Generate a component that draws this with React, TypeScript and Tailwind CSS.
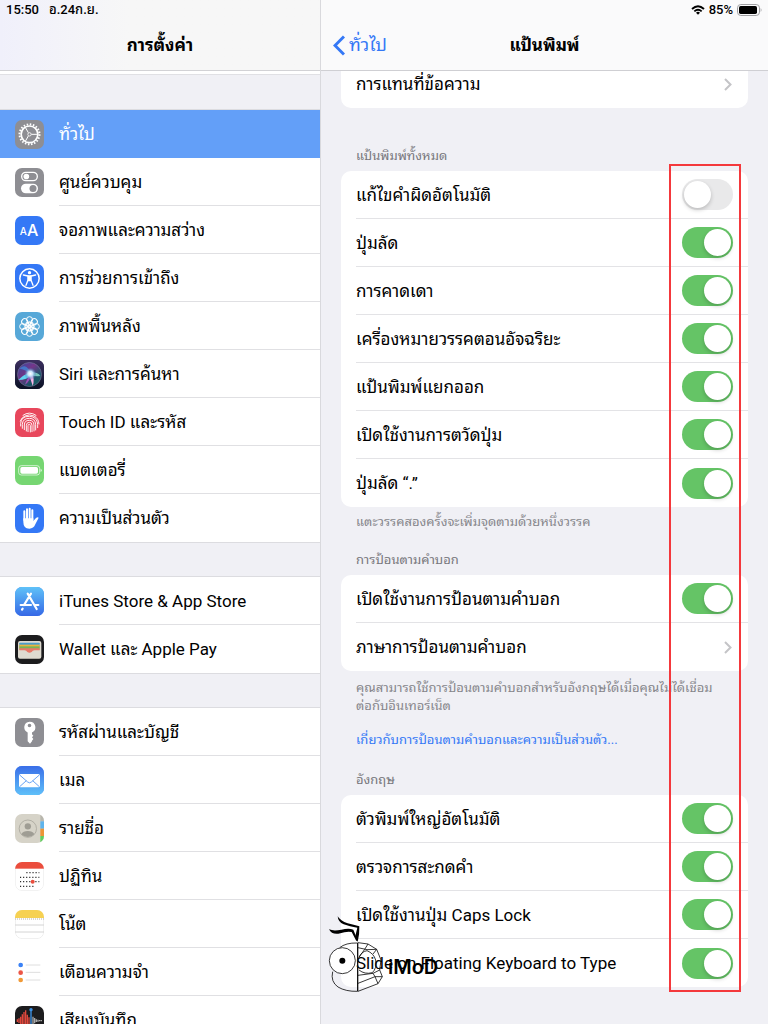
import React from 'react';

interface MenuItem {
  label: string;
  icon: React.ReactNode;
  active?: boolean;
}

interface IconTileProps {
  fill?: string;
  children?: React.ReactNode;
}

const IconTile: React.FC<IconTileProps> = ({ fill = '#ffffff', children }) => (
  <svg viewBox="0 0 87 87" className="h-[29px] w-[29px] shrink-0 overflow-hidden rounded-[7px]" aria-hidden="true">
    <rect width="87" height="87" fill={fill} />
    {children}
  </svg>
);

const GeneralIcon = () => (
  <IconTile fill="#8e8e93">
    <g fill="none" stroke="#fff">
      <circle cx="43.5" cy="43" r="30" strokeWidth="6" strokeDasharray="4.6 4.82" />
      <circle cx="43.5" cy="43" r="25" strokeWidth="5" />
      <circle cx="43.5" cy="43" r="5" strokeWidth="2.5" />
      <path d="M49 43H67M40 38L31 22M40 48L31 64" strokeWidth="3" />
    </g>
  </IconTile>
);

const ControlCenterIcon = () => (
  <IconTile fill="#8e8e93">
    <rect x="20" y="13" width="47" height="25" rx="12.5" fill="none" stroke="#fff" strokeWidth="4" />
    <circle cx="34" cy="25.5" r="8.5" fill="#fff" />
    <rect x="18" y="47" width="51" height="29" rx="14.5" fill="#fff" />
    <circle cx="54" cy="61.5" r="10.5" fill="#8e8e93" />
  </IconTile>
);

const DisplayIcon = () => (
  <IconTile fill="#3478f6">
    <g fill="#fff" fontFamily="Inter, sans-serif" fontWeight="500">
      <text x="14" y="56" fontSize="30">A</text>
      <text x="36" y="61" fontSize="48">A</text>
    </g>
  </IconTile>
);

const AccessibilityIcon = () => (
  <IconTile fill="#3478f6">
    <circle cx="43.5" cy="43.5" r="29" fill="none" stroke="#fff" strokeWidth="4.5" />
    <circle cx="43.5" cy="26" r="5" fill="#fff" />
    <path d="M25 33L39 36V48L33 64M62 33L48 36V48L54 64" fill="none" stroke="#fff" strokeWidth="4" strokeLinecap="round" strokeLinejoin="round" />
    <path d="M38 34H49V52H38Z" fill="#fff" />
  </IconTile>
);

const WallpaperIcon = () => (
  <IconTile fill="#57a8d8">
    <g fill="none" stroke="#fff" strokeWidth="3">
      {[0, 45, 90, 135, 180, 225, 270, 315].map((angle) => (
        <g key={angle} transform={`rotate(${angle} 43.5 43.5)`}>
          <circle cx="43.5" cy="23" r="9" />
          <ellipse cx="43.5" cy="35" rx="4.5" ry="6" />
        </g>
      ))}
      <circle cx="43.5" cy="43.5" r="4" />
    </g>
  </IconTile>
);

const SiriIcon = () => (
  <IconTile fill="#15142b">
    <defs>
      <linearGradient id="siri-bg" x1="0" y1="0" x2="0" y2="1">
        <stop offset="0" stopColor="#3c2f60" />
        <stop offset="1" stopColor="#0b1226" />
      </linearGradient>
      <radialGradient id="siri-core">
        <stop offset="0" stopColor="#ffffff" />
        <stop offset="0.4" stopColor="#c4e2fa" />
        <stop offset="1" stopColor="#2b5ea8" stopOpacity="0" />
      </radialGradient>
      <linearGradient id="siri-orb" x1="0" y1="0" x2="1" y2="1">
        <stop offset="0" stopColor="#2d57b8" />
        <stop offset="0.4" stopColor="#8d3a9c" />
        <stop offset="0.7" stopColor="#1c6a7a" />
        <stop offset="1" stopColor="#1b7d6c" />
      </linearGradient>
    </defs>
    <rect width="87" height="87" fill="url(#siri-bg)" />
    <circle cx="43.5" cy="43.5" r="36" fill="url(#siri-orb)" opacity="0.75" stroke="#8c8bb0" strokeWidth="2" />
    <path d="M47 40Q34 6 14 26Q28 28 47 40Z" fill="#3d8fe0" opacity="0.7" />
    <path d="M50 36Q24 44 10 60Q36 60 50 44Z" fill="#5fd2f0" />
    <path d="M44 36Q70 36 76 48Q60 50 44 44Z" fill="#8be4cf" opacity="0.8" />
    <path d="M41 40L53 78Q60 58 51 38Z" fill="#f8b4e6" />
    <path d="M45 42Q34 62 30 74Q46 62 48 44Z" fill="#b44fc9" opacity="0.8" />
    <circle cx="46" cy="41" r="19" fill="url(#siri-core)" />
  </IconTile>
);

const TouchIdIcon = () => (
  <IconTile fill="#e8475c">
    <g fill="none" stroke="#fff" strokeWidth="2.8" strokeLinecap="round">
      <path d="M24 22Q43 8 63 22" />
      <path d="M16 39Q20 28 30 24Q43 17 57 24Q71 31 72 48" />
      <path d="M17 54V46Q18 25 43 25Q66 26 68 49V59" />
      <path d="M22 61V49Q23 31 43 31Q61 31 62 50V66" />
      <path d="M28 65V51Q28 37 43 37Q56 37 57 51V69" />
      <path d="M34 69V52Q34 43 43 43Q51 43 51 52V71" />
      <path d="M39 71V53Q39 49 43 49Q46 49 46 53V72" />
    </g>
  </IconTile>
);

const BatteryIcon = () => (
  <IconTile fill="#76d672">
    <rect x="11" y="29" width="63" height="28" rx="8" fill="none" stroke="#fff" strokeWidth="2.5" opacity="0.8" />
    <rect x="16" y="33" width="53" height="20" rx="5" fill="#fff" />
    <path d="M77 38Q83 43 77 48Z" fill="#fff" />
  </IconTile>
);

const PrivacyIcon = () => (
  <IconTile fill="#3478f6">
    <path d="M28 22V48M36 16V44M44 14V44M52 19V48" stroke="#fff" strokeWidth="6" strokeLinecap="round" />
    <path d="M25 43H55V51L63 42Q68 38 71 41L61 61Q56 74 43 74Q25 74 25 54Z" fill="#fff" />
  </IconTile>
);

const AppStoreIcon = () => (
  <IconTile fill="#3b82f2">
    <defs>
      <linearGradient id="store-bg" x1="0" y1="0" x2="0" y2="1">
        <stop offset="0" stopColor="#5fc2f8" />
        <stop offset="1" stopColor="#3668e6" />
      </linearGradient>
    </defs>
    <rect width="87" height="87" fill="url(#store-bg)" />
    <g stroke="#fff" strokeWidth="6.5" strokeLinecap="round">
      <path d="M48 20L27 54M38 20L65 66M23 65L21 68M17 54H48M60 54H70" />
    </g>
  </IconTile>
);

const WalletIcon = () => (
  <IconTile fill="#1c1c1e">
    <rect x="9" y="18" width="70" height="53" rx="6" fill="#dedad0" />
    <rect x="13" y="23" width="61" height="12" rx="2" fill="#4d9dc9" />
    <rect x="13" y="29" width="61" height="10" fill="#e9b53f" />
    <rect x="13" y="34" width="61" height="10" fill="#7bb457" />
    <path d="M13 40H74V50H58Q53 50 50 54Q43 59 37 54Q34 50 29 50H13Z" fill="#e97868" />
    <path d="M12 46H29Q34 46 37 51Q43 56 50 51Q53 46 58 46H75V65Q75 68 71 68H16Q12 68 12 65Z" fill="#dedad0" />
  </IconTile>
);

const PasswordsIcon = () => (
  <IconTile fill="#8e8e93">
    <path
      fillRule="evenodd"
      fill="#fff"
      d="M43.5 11A17 17 0 0 1 51 43.5V49L55 53L51 58L55 63L51 68V70L45 77L38 70V43.5A17 17 0 0 1 43.5 11ZM43.5 17A5.5 5.5 0 1 0 43.5 28A5.5 5.5 0 1 0 43.5 17Z"
    />
  </IconTile>
);

const MailIcon = () => (
  <IconTile fill="#3f8cf3">
    <defs>
      <linearGradient id="mail-bg" x1="0" y1="0" x2="0" y2="1">
        <stop offset="0" stopColor="#3a6ee8" />
        <stop offset="1" stopColor="#5fc0f9" />
      </linearGradient>
    </defs>
    <rect width="87" height="87" fill="url(#mail-bg)" />
    <rect x="12" y="24" width="63" height="40" rx="5" fill="#fff" />
    <path d="M14 27L38 48Q43.5 53 49 48L73 27M14 62L34 44M73 62L53 44" fill="none" stroke="#4a8ff0" strokeWidth="2.5" />
  </IconTile>
);

const ContactsIcon = () => (
  <IconTile fill="#d6d3c8">
    <rect x="76" y="0" width="11" height="22" fill="#b8b6ad" />
    <rect x="76" y="22" width="11" height="22" fill="#5fb4ec" />
    <rect x="76" y="44" width="11" height="22" fill="#ec9638" />
    <rect x="76" y="66" width="11" height="21" fill="#62cf60" />
    <circle cx="38.5" cy="44" r="26" fill="none" stroke="#aaa79d" strokeWidth="2.5" />
    <circle cx="38.5" cy="37" r="9.5" fill="#9f9d94" />
    <path d="M19 61Q24 51 38.5 51Q53 51 58 61Q50 69 38.5 69Q27 69 19 61Z" fill="#9f9d94" />
  </IconTile>
);

const CalendarIcon = () => (
  <IconTile>
    <rect x="1" y="1" width="85" height="85" rx="20" fill="#fff" stroke="#e8e8e8" strokeWidth="2" />
    <rect width="87" height="20" fill="#eb4d3d" />
    <g stroke="#2b2b2b" strokeWidth="4" strokeDasharray="3.5 5.7">
      <path d="M34 32H73M15 46H73M15 59H73M15 73H56" />
    </g>
    <circle cx="53" cy="59" r="6" fill="#eb4d3d" />
  </IconTile>
);

const NotesIcon = () => (
  <IconTile>
    <rect x="1" y="1" width="85" height="85" rx="20" fill="#fff" stroke="#e4e4e4" strokeWidth="2" />
    <rect width="87" height="24" fill="#f6d152" />
    <path d="M0 27H87" stroke="#b5b2a8" strokeWidth="3" strokeDasharray="3 3" />
    <path d="M0 45H87M0 66H87" stroke="#d4d4d4" strokeWidth="3" />
  </IconTile>
);

const RemindersIcon = () => (
  <IconTile>
    <circle cx="17" cy="21" r="7" fill="#3b82f6" />
    <circle cx="17" cy="44" r="7" fill="#ec5545" />
    <circle cx="17" cy="66" r="7" fill="#f19a37" />
    <path d="M32 21H76M32 43H76M32 66H76" stroke="#dedede" strokeWidth="3" />
  </IconTile>
);

const VoiceMemosIcon = () => (
  <IconTile fill="#1c1c1e">
    <g strokeWidth="4">
      <path d="M7 40V48M12 37V51M17 32V56M22 25V62M27 18V70M32 13V74M37 26V62M42 34V54" stroke="#e0483c" />
      <path d="M54 32V56M59 36V52M64 40V48M69 41V47M74 42V46M79 42V46" stroke="#a9a9a9" />
      <path d="M48 10V78" stroke="#3d94e8" />
    </g>
    <circle cx="48" cy="11" r="5" fill="#3d94e8" />
  </IconTile>
);

const groups: MenuItem[][] = [
  [
    { label: 'ทั่วไป', icon: <GeneralIcon />, active: true },
    { label: 'ศูนย์ควบคุม', icon: <ControlCenterIcon /> },
    { label: 'จอภาพและความสว่าง', icon: <DisplayIcon /> },
    { label: 'การช่วยการเข้าถึง', icon: <AccessibilityIcon /> },
    { label: 'ภาพพื้นหลัง', icon: <WallpaperIcon /> },
    { label: 'Siri และการค้นหา', icon: <SiriIcon /> },
    { label: 'Touch ID และรหัส', icon: <TouchIdIcon /> },
    { label: 'แบตเตอรี่', icon: <BatteryIcon /> },
    { label: 'ความเป็นส่วนตัว', icon: <PrivacyIcon /> },
  ],
  [
    { label: 'iTunes Store & App Store', icon: <AppStoreIcon /> },
    { label: 'Wallet และ Apple Pay', icon: <WalletIcon /> },
  ],
  [
    { label: 'รหัสผ่านและบัญชี', icon: <PasswordsIcon /> },
    { label: 'เมล', icon: <MailIcon /> },
    { label: 'รายชื่อ', icon: <ContactsIcon /> },
    { label: 'ปฏิทิน', icon: <CalendarIcon /> },
    { label: 'โน้ต', icon: <NotesIcon /> },
    { label: 'เตือนความจำ', icon: <RemindersIcon /> },
    { label: 'เสียงบันทึก', icon: <VoiceMemosIcon /> },
  ],
];

const keyboardOptions = [
  { label: 'แก้ไขคำผิดอัตโนมัติ', on: false },
  { label: 'ปุ่มลัด', on: true },
  { label: 'การคาดเดา', on: true },
  { label: 'เครื่องหมายวรรคตอนอัจฉริยะ', on: true },
  { label: 'แป้นพิมพ์แยกออก', on: true },
  { label: 'เปิดใช้งานการตวัดปุ่ม', on: true },
  { label: 'ปุ่มลัด “.”', on: true },
];

const englishOptions = [
  { label: 'ตัวพิมพ์ใหญ่อัตโนมัติ', on: true },
  { label: 'ตรวจการสะกดคำ', on: true },
  { label: 'เปิดใช้งานปุ่ม Caps Lock', on: true },
  { label: 'Slide on Floating Keyboard to Type', on: true },
];

const Sidebar = () => (
  <aside className="flex w-5/12 flex-col bg-[#f0f0f5]">
    <header className="z-10 flex h-[71px] shrink-0 flex-col border-b border-[#d2d2d5] bg-linear-to-r from-[#f0f0fb] to-[#f7f7f7] to-40%">
      <div className="flex h-5 items-center gap-[10px] px-[6px] text-[13px] font-medium">
        <span>15:50</span>
        <span>อ.24ก.ย.</span>
      </div>
      <h1 className="flex h-[50px] items-center justify-center font-bold">การตั้งค่า</h1>
    </header>
    <nav className="flex min-h-0 flex-1 flex-col gap-[35px] overflow-y-auto [scrollbar-width:none]">
      <div className="h-1 shrink-0 border-b border-[#e0e0e4] bg-white" />
      {groups.map((items, i) => (
        <ul key={i} className="bg-white shadow-[0_1px_0_#dcdce0,0_-1px_0_#dcdce0]">
          {items.map(({ label, icon, active }, row) => (
            <li key={label}>
              <a href="#" className={active ? 'flex h-12 items-center gap-[15px] bg-[#639ff8] pl-[15px] text-white' : 'flex h-12 items-center gap-[15px] pl-[15px]'}>
                {icon}
                <span className={active || row === items.length - 1 ? 'flex h-full flex-1 items-center' : 'flex h-full flex-1 items-center border-b border-[#e0e0e3]'}>
                  {label}
                </span>
              </a>
            </li>
          ))}
        </ul>
      ))}
    </nav>
  </aside>
);

const Card: React.FC<{ children: React.ReactNode }> = ({ children }) => (
  <div className="mx-5 overflow-hidden rounded-[10px] bg-white pl-[15px] [&>*:not(:last-child)]:border-b [&>*:not(:last-child)]:border-[#e3e3e6]">
    {children}
  </div>
);

const SwitchRow: React.FC<{ label: string; on: boolean }> = ({ label, on }) => (
  <label className="flex h-12 items-center justify-between pr-[15px]">
    <span>{label}</span>
    <input
      type="checkbox"
      role="switch"
      defaultChecked={on}
      className="h-[31px] w-[51px] shrink-0 appearance-none rounded-full bg-[#e9e9ea] p-[2px] transition-colors before:block before:h-[27px] before:w-[27px] before:rounded-full before:bg-white before:shadow-[0_2px_4px_rgba(0,0,0,0.2)] before:transition-transform checked:bg-[#65c466] checked:before:translate-x-5"
    />
  </label>
);

const LinkRow: React.FC<{ label: string }> = ({ label }) => (
  <a href="#" className="flex h-12 items-center justify-between pr-4">
    <span>{label}</span>
    <svg viewBox="0 0 8 13" className="h-[13px] w-2" fill="none" stroke="#c4c4c7" strokeWidth="2" aria-hidden="true">
      <path d="M1 1L6.5 6.5L1 12" />
    </svg>
  </a>
);

const SectionTitle: React.FC<{ children: React.ReactNode }> = ({ children }) => (
  <h3 className="px-[35px] pb-[6px] text-[13px] leading-[18px] text-[#77777c]">{children}</h3>
);

const StatusIcons = () => (
  <div className="flex h-5 items-center justify-end gap-1 pr-[6px] text-[13px] font-medium">
    <svg viewBox="0 0 42 30" className="h-[10px] w-[14px]" fill="none" stroke="#000" strokeWidth="5.5" aria-hidden="true">
      <path d="M3 12Q21 -5 39 12M10 19Q21 9 32 19" />
      <path d="M15 23Q21 18 27 23L21 29Z" fill="#000" stroke="none" />
    </svg>
    <span>85%</span>
    <svg viewBox="0 0 75 36" className="h-3 w-[25px]" aria-hidden="true">
      <rect x="1.5" y="1.5" width="66" height="33" rx="10" fill="none" stroke="#a0a0a3" strokeWidth="3" />
      <rect x="6" y="6" width="54" height="24" rx="5" fill="#000" />
      <path d="M71 12Q76 18 71 24Z" fill="#a0a0a3" />
    </svg>
  </div>
);

// Robot head watermark: antennae, round eye and a faceted right half
const Watermark = () => (
  <div className="pointer-events-none absolute bottom-[31px] left-[7px] flex items-center gap-[5px]">
    <svg viewBox="25 165 165 234" className="h-[78px] w-[55px]" fill="none" stroke="#111" strokeWidth="2.5" aria-hidden="true">
      <g fill="#000" stroke="none">
        <path d="M54 169Q62 183 84 190Q102 194 119 199Q120 222 114 246L107 228L113 203Q90 200 72 193Q55 186 54 169Z" />
        <path d="M28 208Q42 214 65 209Q88 204 101 209L114 241L110 243L96 216Q78 214 62 220Q37 226 28 208Z" />
      </g>
      <path d="M113 249Q78 248 60 263M39 335Q32 365 55 381Q78 395 114 394" />
      <path d="M114 248V394" strokeWidth="4" />
      <circle cx="68" cy="302" r="39" fill="#fff" />
      <circle cx="68" cy="302" r="9" fill="#000" stroke="none" />
      <path d="M115 248L145 252L171 268L184 300L180 330L188 350L175 371L115 394" />
      <path d="M115 263L142 269L171 268M145 252L135 268L118 292M171 268L160 282M180 330L160 340L115 346M160 340L166 350L188 350M166 350L115 370M166 350L175 371" />
      <path d="M118 292Q125 275 142 272Q162 280 168 300Q172 325 158 338Q135 344 118 330" />
    </svg>
    <span className="pt-[26px] font-[Inter,sans-serif] text-[20px] leading-5 font-semibold">iMoD</span>
  </div>
);

const KeyboardPane = () => (
  <main className="relative flex w-7/12 flex-col border-l border-[#d9d9dd] bg-[#f0f0f5]">
    <header className="z-10 flex h-[71px] shrink-0 flex-col border-b border-[#cfcfd3] bg-[#fafafb]">
      <StatusIcons />
      <div className="grid h-[50px] grid-cols-3 items-center">
        <a href="#" className="flex items-center gap-1 pl-3 text-[18px] text-[#3478f6]">
          <svg viewBox="0 0 12 21" className="h-[21px] w-3" fill="none" stroke="#3478f6" strokeWidth="3" aria-hidden="true">
            <path d="M11 1.5L2 10.5L11 19.5" />
          </svg>
          ทั่วไป
        </a>
        <h2 className="text-center font-bold">แป้นพิมพ์</h2>
      </div>
    </header>

    <div className="-mt-[11px] min-h-0 flex-1 overflow-y-auto [scrollbar-width:none]">
      <Card>
        <LinkRow label="การแทนที่ข้อความ" />
      </Card>

      <section className="pt-[39px]">
        <SectionTitle>แป้นพิมพ์ทั้งหมด</SectionTitle>
        <Card>
          {keyboardOptions.map((option) => (
            <SwitchRow key={option.label} {...option} />
          ))}
        </Card>
        <p className="px-[35px] pt-[6px] text-[13px] leading-[18px] text-[#86868b]">แตะวรรคสองครั้งจะเพิ่มจุดตามด้วยหนึ่งวรรค</p>
      </section>

      <section className="pt-5">
        <SectionTitle>การป้อนตามคำบอก</SectionTitle>
        <Card>
          <SwitchRow label="เปิดใช้งานการป้อนตามคำบอก" on />
          <LinkRow label="ภาษาการป้อนตามคำบอก" />
        </Card>
        <div className="pt-2 pr-5 pl-[35px] text-[13px] leading-[18px] text-[#86868b]">
          <p>
            คุณสามารถใช้การป้อนตามคำบอกสำหรับอังกฤษได้เมื่อคุณไม่ได้เชื่อม
            <br />
            ต่อกับอินเทอร์เน็ต
          </p>
          <a href="#" className="mt-4 block text-[#3478f6]">เกี่ยวกับการป้อนตามคำบอกและความเป็นส่วนตัว...</a>
        </div>
      </section>

      <section className="pt-[22px]">
        <SectionTitle>อังกฤษ</SectionTitle>
        <Card>
          {englishOptions.map((option) => (
            <SwitchRow key={option.label} {...option} />
          ))}
        </Card>
      </section>
    </div>

    <div className="pointer-events-none absolute top-[164px] right-[27px] h-[828px] w-[72px] border-2 border-[#f4383c]" />
    <Watermark />
  </main>
);

export default function App() {
  return (
    <div className="flex h-screen overflow-hidden bg-[#f0f0f5] font-[Roboto,'Noto_Sans_Thai_Looped','Noto_Sans_Thai','Noto_Sans',sans-serif] text-[17px] leading-6 text-black">
      <Sidebar />
      <KeyboardPane />
    </div>
  );
}
